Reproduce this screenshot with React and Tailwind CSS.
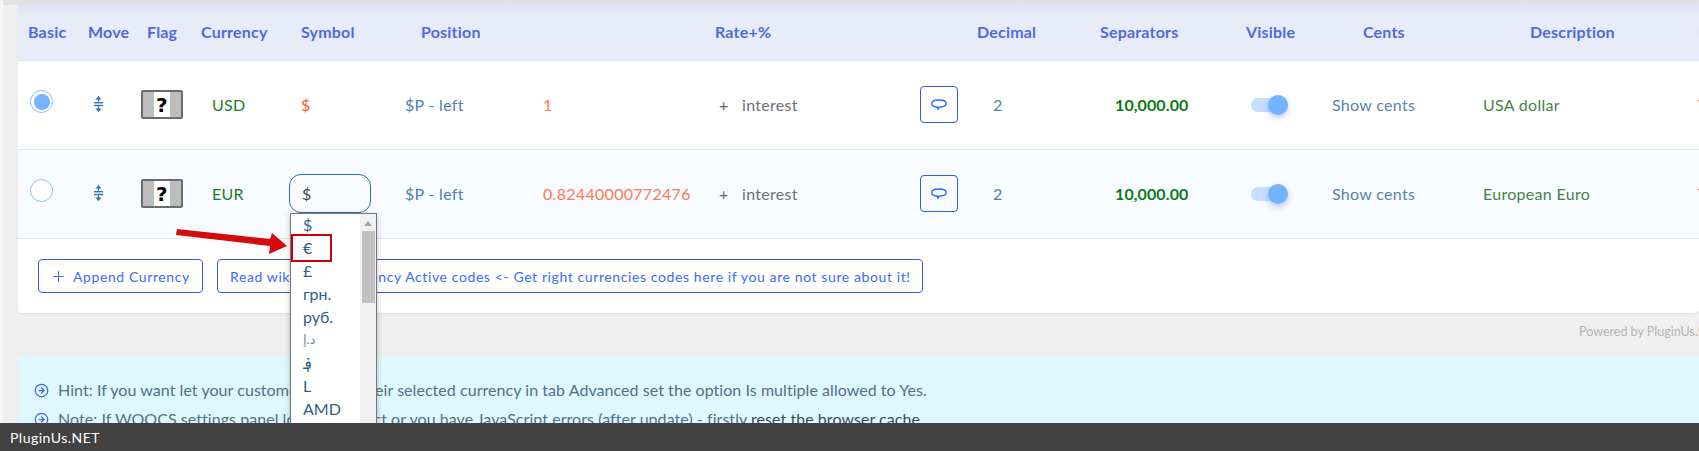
import { CircleArrowRight, Plus } from 'lucide-react'

const GRID = 'grid grid-cols-[60px_59px_54px_88px_116px_138px_434px_123px_146px_86px_151px_215px_11px]'

const currencies = [
  { code: 'USD', rate: '1', desc: 'USA dollar', checked: true, bg: 'bg-white', open: false },
  { code: 'EUR', rate: '0.82440000772476', desc: 'European Euro', checked: false, bg: 'bg-[#f8fbff]', open: true },
]

const symbols = ['$', '€', '£', 'грн.', 'руб.', 'د.إ', '؋', 'L', 'AMD', 'AOA']

function MoveIcon() {
  return (
    <svg width="9" height="16" viewBox="0 0 9 16" className="text-[#2f75b5]" fill="currentColor">
      <path d="M4.5 0 L7.5 3.5 H5.2 V5.5 H3.8 V3.5 H1.5 Z" />
      <rect x="0" y="6" width="9" height="1.4" />
      <rect x="0" y="8.8" width="9" height="1.4" />
      <path d="M4.5 16 L1.5 12.5 H3.8 V10.5 H5.2 V12.5 H7.5 Z" />
    </svg>
  )
}

function FlagIcon() {
  return (
    <div className="flex h-[29px] w-[42px] justify-center rounded-[2px] border-2 border-[#6b6b6b] bg-[#bdbdbd]">
      <div className="flex w-[16px] items-center justify-center bg-white font-['DejaVu_Sans',sans-serif] text-[20px] leading-none font-bold text-black">
        ?
      </div>
    </div>
  )
}

function UndoIcon() {
  return (
    <svg width="16" height="12" viewBox="0 0 16 12" fill="none" stroke="#2b6cff" strokeWidth="1.4">
      <path d="M5.5 8 C2.5 7.8 .8 6.4 .8 4.5 C.8 2.5 3.5 1 8 1 C12.5 1 15.2 2.5 15.2 4.5 C15.2 6.4 12.5 7.8 9 8" />
      <path d="M4.6 7.6 H9.4 L7 11.4 Z" fill="#2b6cff" stroke="none" />
    </svg>
  )
}

function Row({ item }) {
  return (
    <div className={`${GRID} h-[89px] items-center border-b border-[#e2e5ec] pb-px text-[16px] tracking-[0.3px] ${item.bg}`}>
      <div className="pb-[6px] pl-3">
        <div className="flex h-[23px] w-[23px] items-center justify-center rounded-full border border-[#86bfff] bg-white">
          {item.checked && <div className="h-[16px] w-[16px] rounded-full bg-[#74b3ff]" />}
        </div>
      </div>
      <div className="flex pb-px pl-4">
        <MoveIcon />
      </div>
      <div className="pl-1">
        <FlagIcon />
      </div>
      <div className="pl-[21px] text-[#19801f]">{item.code}</div>
      <div className="pl-[10px]">
        {item.open ? (
          <div className="flex h-[39px] w-[82px] items-center rounded-[12px] border border-[#2271b1] pl-3 text-[#3c4a58]">$</div>
        ) : (
          <div className="pl-3 text-[#ff5a2b]">$</div>
        )}
      </div>
      <div className="pl-[10px] text-[#4f80b0]">$P - left</div>
      <div className="flex items-center pl-[10px]">
        <div className="w-[176px] text-[#ff7a50]">{item.rate}</div>
        <div className="w-[23px] text-[#666666]">+</div>
        <div className="w-[178px] text-[#6b6f76]">interest</div>
        <div className="flex h-[37px] w-[38px] items-center justify-center rounded-[4px] border border-[#2f5fe0]">
          <UndoIcon />
        </div>
      </div>
      <div className="pl-[26px] text-[#4f80b0]">2</div>
      <div className="pl-[25px] font-bold tracking-[0.1px] text-[#0a7a14]">10,000.00</div>
      <div className="pl-[15px]">
        <div className="flex h-[14px] w-[37px] items-center justify-end rounded-full bg-[#c6deff]">
          <div className="h-[20px] w-[20px] rounded-full bg-[#74b3ff] shadow-[0_3px_6px_rgba(70,110,200,0.35)]" />
        </div>
      </div>
      <div className="pl-[10px] text-[#5a82aa]">Show cents</div>
      <div className="pl-[10px] text-[#4a7f4a]">{item.desc}</div>
      <div className="pl-[10px] text-[#c0392b]">T</div>
    </div>
  )
}

function SymbolDropdown() {
  return (
    <div className="absolute top-[213px] left-[290px] z-10 flex h-[240px] w-[87px] border border-[#767676] bg-white shadow-[0_2px_6px_rgba(0,0,0,0.25)]">
      <div className="-mt-px flex-1 pl-3 text-[16px] leading-[23px] text-[#2f5f88]">
        {symbols.map((s) => (
          <div key={s} className={s === 'د.إ' ? 'text-[13px] text-[#6f8ba3]' : ''}>{s}</div>
        ))}
      </div>
      <div className="flex w-[16px] flex-col items-center bg-[#f1f1f1]">
        <div className="mt-[7px] h-0 w-0 border-x-[4px] border-b-[5px] border-x-transparent border-b-[#a3a3a3]" />
        <div className="mt-[5px] h-[72px] w-[13px] bg-[#c1c1c1]" />
      </div>
      <div className="absolute top-[20px] left-0 h-[28px] w-[41px] border-2 border-[#cc0000]" />
    </div>
  )
}

function RedArrow() {
  return (
    <svg className="absolute top-[228px] left-[175px] z-20" width="115" height="30" viewBox="0 0 115 30">
      <path d="M2 1 L95 11 L97 5 L112 18 L94 26 L95 18 L1 7 Z" fill="#d40b0b" />
    </svg>
  )
}

export default function App() {
  const font = "font-['Lato','Noto_Sans','DejaVu_Sans',sans-serif]"
  return (
    <div className={`relative h-[451px] w-[1699px] overflow-hidden bg-[#efefef] ${font}`}>
      <div className="absolute top-0 left-0 h-full w-[3px] bg-[#f8f8f8]" />
      <div className="h-[5px] bg-[#e2e2e2]" />

      <div className="ml-[18px] rounded-b-[4px] bg-white shadow-[0_1px_2px_rgba(0,0,0,0.08)]">
        <div className={`${GRID} h-[56px] items-center border-b border-[#e0e3ea] bg-linear-to-b from-[#dfe3f1] to-[#e8ecf9] to-[20%] pb-px text-[16px] font-bold tracking-[0.2px] text-[#4e6ae2]`}>
          <div className="pl-[10px]">Basic</div>
          <div className="pl-[10px]">Move</div>
          <div className="pl-[10px]">Flag</div>
          <div className="pl-[10px]">Currency</div>
          <div className="pl-[22px]">Symbol</div>
          <div className="pl-[26px]">Position</div>
          <div className="pl-[182px]">Rate+%</div>
          <div className="pl-[10px]">Decimal</div>
          <div className="pl-[10px]">Separators</div>
          <div className="pl-[10px]">Visible</div>
          <div className="pl-[41px]">Cents</div>
          <div className="pl-[57px]">Description</div>
          <div className="pl-[10px]">I</div>
        </div>

        {currencies.map((item) => (
          <Row key={item.code} item={item} />
        ))}

        <div className="flex gap-[14px] pt-5 pb-5 pl-5 text-[14px] tracking-[0.6px] text-[#3d6cf5]">
          <button className="flex h-[34px] w-[165px] items-center gap-[6px] rounded-[4px] border border-[#2f5fe0] pl-[11px]">
            <Plus size={17} strokeWidth={1.5} />
            Append Currency
          </button>
          <button className="flex h-[34px] w-[706px] items-center rounded-[4px] border border-[#2f5fe0] pl-[12px] whitespace-nowrap">
            Read wiki about Currency Active codes &lt;- Get right currencies codes here if you are not sure about it!
          </button>
        </div>
      </div>

      <div className="flex h-[44px] items-center pb-[6px] pl-[1579px] text-[12.5px] whitespace-nowrap text-[#b3b3b3]">
        Powered by PluginUs.NET
      </div>

      <div className="ml-[18px] h-[94px] bg-[#dff7ff] pt-[22px] pl-4 text-[16px] tracking-[0.05px] text-[#4f7286]">
        <div className="flex h-[22px] items-center gap-[9px]">
          <CircleArrowRight size={15} className="text-[#4466dd]" />
          Hint: If you want let your customers pay in their selected currency in tab Advanced set the option Is multiple allowed to Yes.
        </div>
        <div className="mt-[7px] flex h-[22px] items-center gap-[9px]">
          <CircleArrowRight size={15} className="text-[#4466dd]" />
          <span>
            Note: If WOOCS settings panel looks incorrect or you have JavaScript errors (after update) - firstly <span className="text-[#3c4a58]">reset the browser cache</span>
          </span>
        </div>
      </div>

      <SymbolDropdown />
      <RedArrow />

      <div className="absolute right-0 bottom-0 left-0 z-30 flex h-[28px] items-center bg-[#424242] pl-[10px] text-[14px] tracking-[0.5px] text-white">
        PluginUs.NET
      </div>
    </div>
  )
}
